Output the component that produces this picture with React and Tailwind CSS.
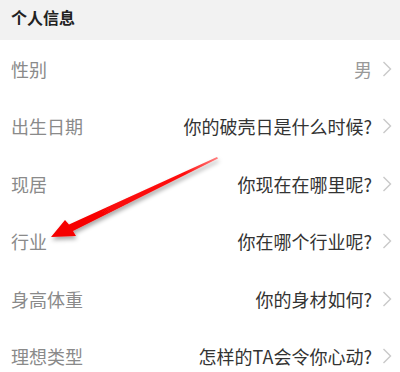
import React from "react";

const rows = [
  ["性别", "男", true],
  ["出生日期", "你的破壳日是什么时候?"],
  ["现居", "你现在在哪里呢?"],
  ["行业", "你在哪个行业呢?"],
  ["身高体重", "你的身材如何?"],
  ["理想类型", "怎样的TA会令你心动?"],
];

function Chevron() {
  return (
    <svg width="10" height="16" viewBox="0 0 10 16" className="shrink-0">
      <polyline points="1.5,1 8.5,8 1.5,15" fill="none" stroke="#c9c9c9" strokeWidth="1.4" />
    </svg>
  );
}

export default function App() {
  return (
    <div
      className="relative w-[400px] h-[372px] overflow-hidden bg-white"
      style={{ fontFamily: '"Noto Sans CJK SC", "Noto Sans", sans-serif' }}
    >
      <div className="h-[40px] bg-[#f2f2f2] flex items-center pl-[11px] pb-[6px]">
        <span className="text-[16px] font-bold text-[#222] leading-none">个人信息</span>
      </div>
      {rows.map(([l, v, gray]) => (
        <div key={l} className="h-[57.5px] flex items-center pl-[11px] pr-[8px]">
          <span className="text-[18px] text-[#8a8a8a] leading-none">{l}</span>
          <span className={"ml-auto text-[18px] leading-none " + (gray ? "text-[#999]" : "text-[#333]")}>{v}</span>
          <span className="ml-[10px]"><Chevron /></span>
        </div>
      ))}
      <svg
        className="absolute left-0 top-0 pointer-events-none"
        width="400"
        height="372"
        viewBox="0 0 400 372"
      >
        <defs>
          <filter id="sh" x="-20%" y="-20%" width="140%" height="160%">
            <feDropShadow dx="1" dy="3" stdDeviation="2" floodColor="#000" floodOpacity="0.35" />
          </filter>
          <linearGradient id="g" x1="51" y1="237" x2="218" y2="157" gradientUnits="userSpaceOnUse">
            <stop offset="0" stopColor="#f40000" />
            <stop offset="0.8" stopColor="#ff1010" />
            <stop offset="1" stopColor="#ff8080" />
          </linearGradient>
        </defs>
        <polygon
          filter="url(#sh)"
          fill="url(#g)"
          points="51,237 65,220 69,224.5 217,157 218,158.5 73,231 76,236"
        />
      </svg>
    </div>
  );
}
